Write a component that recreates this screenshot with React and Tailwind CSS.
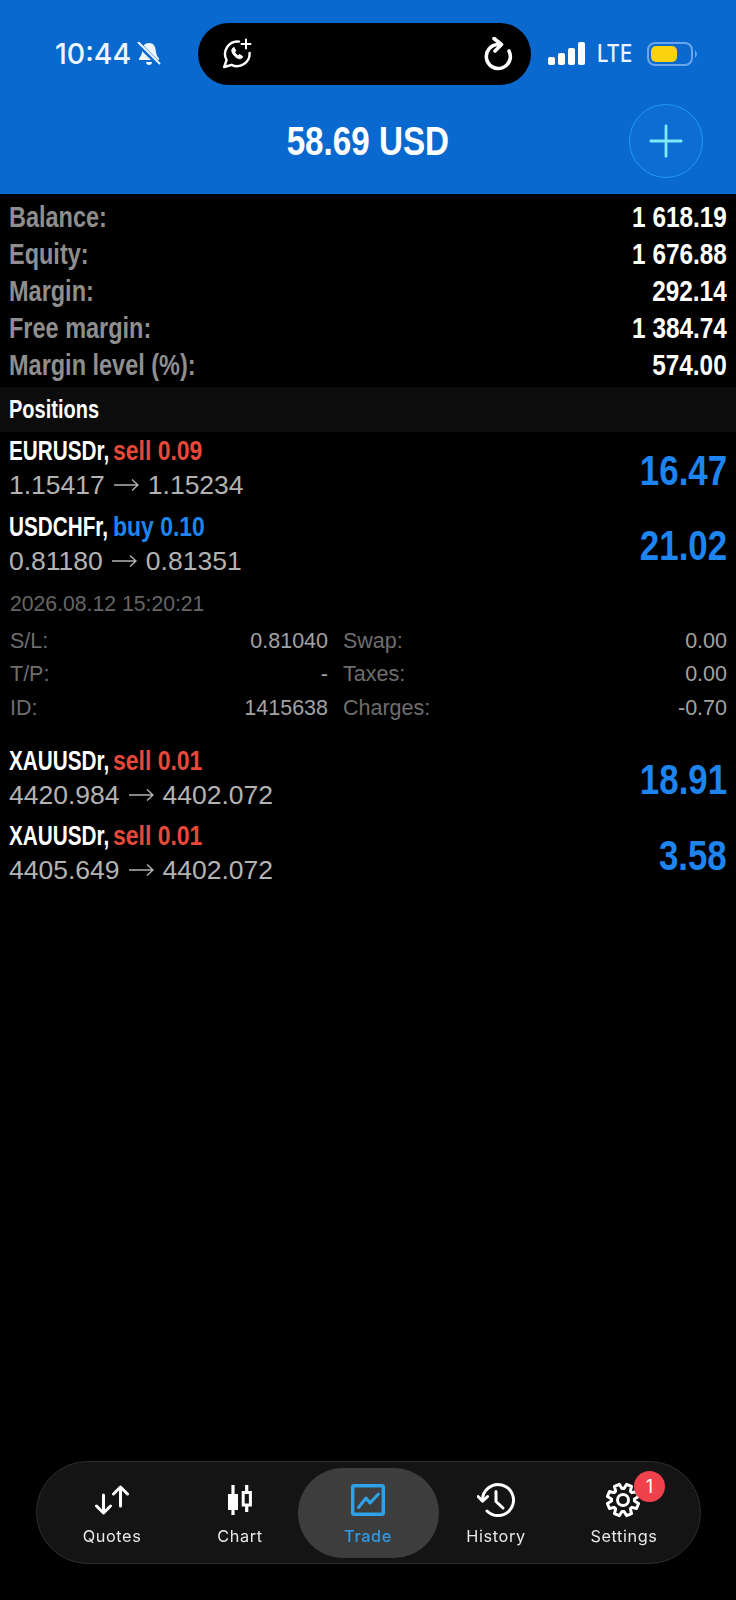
import { Plus } from "lucide-react";

const SANS = "font-['Liberation_Sans',Arial,sans-serif]";

// 8 tooth gear outline for the settings tab
function gearPath(cx, cy, outer, root) {
  const points = [];
  for (let i = 0; i < 8; i++) {
    const a = (i * Math.PI) / 4 + Math.PI / 8;
    [[-0.3, root], [-0.17, outer], [0.17, outer], [0.3, root]].forEach(([da, r]) => {
      points.push(`${(cx + r * Math.cos(a + da)).toFixed(2)} ${(cy + r * Math.sin(a + da)).toFixed(2)}`);
    });
  }
  return `M${points.join("L")}Z`;
}

function Narrow({ children, right, className = "" }) {
  // the app's text is a squeezed Helvetica, so squeeze Liberation the same way
  return (
    <span className={`inline-block whitespace-nowrap ${right ? "origin-right" : "origin-left"} ${className}`}>
      {children}
    </span>
  );
}

function SummaryRow({ label, value }) {
  return (
    <div className="flex h-[37px] items-center justify-between font-bold text-[29px]">
      <Narrow className="scale-x-[0.81] text-[#8e8e8e]">{label}</Narrow>
      <Narrow right className="scale-x-[0.84] text-white">{value}</Narrow>
    </div>
  );
}

function Position({ symbol, side, volume, open, now, profit, sideColor }) {
  return (
    <div className="flex h-[75.5px] justify-between">
      <div className="flex flex-col">
        <div className="flex h-[36px] items-center gap-[6px] text-[28px] font-bold leading-none">
          <Narrow className="w-[98px] scale-x-[0.74] text-white">{symbol},</Narrow>
          <Narrow className={`scale-x-[0.82] ${sideColor}`}>{side} {volume}</Narrow>
        </div>
        <div className="flex h-[34px] items-center whitespace-nowrap text-[26.5px] font-normal text-[#b3b3b3]">
          <span>{open}</span>
          <svg width="25" height="14" viewBox="0 0 25 14" fill="none" stroke="#b3b3b3" strokeWidth="1.4" className="mx-[9px] -mt-[2px]">
            <path d="M0 7h24M18 1.500 24 7l-6 5.500" />
          </svg>
          <span>{now}</span>
        </div>
      </div>
      <div className="flex h-[70px] items-center pt-[4px]">
        <Narrow right className="scale-x-[0.83] text-[42px] font-bold text-[#1d84f0]">{profit}</Narrow>
      </div>
    </div>
  );
}

function Detail({ label, value }) {
  return (
    <div className="flex h-[33.5px] items-center justify-between text-[21.5px]">
      <span className="text-[#6e6e6e]">{label}</span>
      <span className="text-[#a3a3a3]">{value}</span>
    </div>
  );
}

function NavItem({ icon, label, active, children }) {
  return (
    <div className={`relative flex h-[90px] flex-col items-center justify-center rounded-[45px] ${active ? "-mx-[6.5px] w-[141px] bg-[#3d3d3d]" : "w-[128px]"}`}>
      <div className="flex h-[40px] items-center justify-center">{icon}</div>
      <div className={`mt-[6px] text-[16.3px] leading-5 tracking-[0.6px] font-['Inter',sans-serif] ${active ? "font-medium text-[#2f9be6]" : "text-[#e8e8e8]"}`}>{label}</div>
      {children}
    </div>
  );
}

function QuotesIcon() {
  return (
    <svg width="34" height="30" viewBox="0 0 34 30" fill="none" stroke="#fff" strokeWidth="3" strokeLinecap="round" strokeLinejoin="round">
      <path d="M8.500 10v18M1.500 21l7 7 7-7" />
      <path d="M25.500 21V2M18.500 9l7-7 7 7" />
    </svg>
  );
}

function ChartIcon() {
  return (
    <svg width="24" height="30" viewBox="0 0 24 30" fill="none" stroke="#fff" strokeWidth="3.2">
      <path d="M5 0v30M18.700 0v27" />
      <rect x="0" y="9" width="10" height="16" fill="#fff" stroke="none" />
      <rect x="15.200" y="7.500" width="7.200" height="12.500" fill="#141414" strokeWidth="3" />
    </svg>
  );
}

function TradeIcon() {
  return (
    <svg width="34" height="32" viewBox="0 0 34 32" fill="none" stroke="#2ea3ea" strokeWidth="3.4" strokeLinejoin="round" strokeLinecap="round">
      <rect x="1.700" y="1.700" width="30.600" height="28.600" rx="1.500" />
      <path d="M7.500 23.500l7.500-9.500 4 5 8.500-9" strokeWidth="3" />
    </svg>
  );
}

function HistoryIcon() {
  return (
    <svg width="38" height="36" viewBox="0 0 38 36" fill="none" stroke="#fff" strokeWidth="3" strokeLinecap="round" strokeLinejoin="round">
      <path d="M5.500 18.500A15.500 15.500 0 1 1 10 29" />
      <path d="M1 14.500l4.600 4.600 5-4.600" />
      <path d="M19 9.500v10l7 6.500" />
    </svg>
  );
}

function SettingsIcon() {
  return (
    <svg width="36" height="36" viewBox="0 0 36 36" fill="none" stroke="#fff" strokeWidth="3" strokeLinejoin="round" className="-ml-[2px]">
      <path d={gearPath(18, 18, 16, 11.500)} />
      <circle cx="18" cy="18" r="5.500" />
    </svg>
  );
}

function MutedBell() {
  return (
    <svg width="24" height="24" viewBox="0 0 24 24" className="ml-[6px]">
      <path d="M12 1c4.500 0 6.500 3.500 6.800 8 .2 3 1.200 5 3.200 7.500v1.500H2v-1.500c2-2.500 3-4.500 3.200-7.500C5.500 4.500 7.500 1 12 1z" fill="#eef5ff" />
      <path d="M9 20h6c0 2-1.300 3-3 3s-3-1-3-3z" fill="#eef5ff" />
      <path d="M1 1.500 23 23.500" stroke="#0a69ce" strokeWidth="5" />
      <path d="M1 0 23 22" stroke="#eef5ff" strokeWidth="2" />
    </svg>
  );
}

function WhatsPlus() {
  return (
    <svg width="30" height="32" viewBox="0 0 30 32" fill="none" stroke="#fff" strokeWidth="2.4" strokeLinecap="round" strokeLinejoin="round">
      <path d="M17 3.600A12.500 12.500 0 0 0 4.600 22L2.200 29l7.400-2.200A12.500 12.500 0 0 0 27.600 15" />
      <path d="M10.500 10.500c-1.600 1.600-.6 4.600 2 7.400s5.800 3.600 7.400 2l.8-1.400-3.200-2-1.400 1.200c-1-.5-3-2.500-3.500-3.600l1.200-1.400-1.800-3.200z" fill="#fff" strokeWidth="1" />
      <path d="M24 1.500v9M19.500 6h9" strokeWidth="2" />
    </svg>
  );
}

function RefreshIcon() {
  return (
    <svg width="30" height="34" viewBox="0 0 30 34" fill="none" stroke="#fff" strokeWidth="3.6" strokeLinecap="round" strokeLinejoin="round">
      <path d="M15 7.500A12 12 0 1 0 26 14" />
      <path d="M11 1.500l7.500 6-6.500 6.500" />
    </svg>
  );
}

function StatusBar() {
  return (
    <div className="flex h-[85px] items-start pt-[23px]">
      <div className="flex h-[62px] w-[198px] items-center pl-[55px]">
        <span className="text-[28.5px] font-medium leading-none text-[#eef5ff] font-['Inter',sans-serif]">10:44</span>
        <MutedBell />
      </div>
      <div className="flex h-[62px] w-[333px] items-center justify-between rounded-[31px] bg-black pl-[24px] pr-[18px]">
        <WhatsPlus />
        <RefreshIcon />
      </div>
      <div className="flex h-[62px] items-center pl-[17px]">
        <svg width="37" height="24" viewBox="0 0 37 24" fill="#fff">
          <rect x="0" y="15" width="7" height="8" rx="2" />
          <rect x="10" y="11" width="7" height="12" rx="2" />
          <rect x="20" y="6" width="7" height="17" rx="2" />
          <rect x="30" y="0" width="7" height="23" rx="2" />
        </svg>
        <span className="ml-[12px] origin-left scale-x-[0.85] text-[24px] font-medium text-[#eef5ff] font-['Inter',sans-serif]">LTE</span>
        <svg width="52" height="24" viewBox="0 0 52 24" fill="none" className="ml-[9px]">
          <rect x="1" y="1" width="44" height="22" rx="7" stroke="#6ba6ec" strokeWidth="2" />
          <rect x="4" y="4" width="26" height="16" rx="5" fill="#fbd20e" />
          <path d="M48 8.500c2.500 1 2.500 6 0 7z" fill="#6ba6ec" />
        </svg>
      </div>
    </div>
  );
}

export default function App() {
  return (
    <div className={`h-[1600px] w-[736px] overflow-hidden bg-black ${SANS}`}>
      <header className="h-[194px] bg-[#0a69ce]">
        <StatusBar />
        <div className="relative flex h-[109px] items-center justify-center pt-[2px]">
          <span className="inline-block scale-x-[0.83] text-[40px] font-bold leading-none text-white">58.69 USD</span>
          <div className="absolute right-[33px] top-[19px] flex h-[74px] w-[74px] items-center justify-center rounded-full border-[1.5px] border-[#1f9bf0] bg-[#0d6dd2]">
            <Plus size={52} strokeWidth={1.3} className="text-[#7fe9f7]" />
          </div>
        </div>
      </header>

      <section className="px-[9px] pt-[5px]">
        <SummaryRow label="Balance:" value="1 618.19" />
        <SummaryRow label="Equity:" value="1 676.88" />
        <SummaryRow label="Margin:" value="292.14" />
        <SummaryRow label="Free margin:" value="1 384.74" />
        <SummaryRow label="Margin level (%):" value="574.00" />
      </section>

      <div className="mt-[3px] flex h-[45px] items-center bg-[#0c0c0c] px-[9px] pt-[1px] text-[25px] font-bold text-white">
        <Narrow className="scale-x-[0.8]">Positions</Narrow>
      </div>

      <section className="px-[9px] pt-[1px]">
        <Position symbol="EURUSDr" side="sell" volume="0.09" open="1.15417" now="1.15234" profit="16.47" sideColor="text-[#e8483a]" />
        <Position symbol="USDCHFr" side="buy" volume="0.10" open="0.81180" now="0.81351" profit="21.02" sideColor="text-[#1d84f0]" />

        <div className="mt-[3px] flex h-[34px] items-center pl-[1px] text-[21.2px] text-[#666666]">
          2026.08.12 15:20:21
        </div>
        <div className="mt-[3px] grid grid-cols-[318px_1fr] gap-x-[15px] pl-[1px]">
          <div>
            <Detail label="S/L:" value="0.81040" />
            <Detail label="T/P:" value="-" />
            <Detail label="ID:" value="1415638" />
          </div>
          <div>
            <Detail label="Swap:" value="0.00" />
            <Detail label="Taxes:" value="0.00" />
            <Detail label="Charges:" value="-0.70" />
          </div>
        </div>

        <div className="mt-[18px]">
          <Position symbol="XAUUSDr" side="sell" volume="0.01" open="4420.984" now="4402.072" profit="18.91" sideColor="text-[#e8483a]" />
          <Position symbol="XAUUSDr" side="sell" volume="0.01" open="4405.649" now="4402.072" profit="3.58" sideColor="text-[#e8483a]" />
        </div>
      </section>

      <div className="fixed left-[36px] top-[1461px] flex h-[103px] w-[665px] items-center rounded-[52px] border border-[#2e2e2e] bg-[#141414] px-[11px]">
        <NavItem icon={<QuotesIcon />} label="Quotes" />
        <NavItem icon={<ChartIcon />} label="Chart" />
        <NavItem icon={<TradeIcon />} label="Trade" active />
        <NavItem icon={<HistoryIcon />} label="History" />
        <NavItem icon={<SettingsIcon />} label="Settings">
          <span className="absolute right-[23px] top-[3px] flex h-[31px] w-[31px] items-center justify-center rounded-full bg-[#f0424c] text-[18px] text-white font-['Inter',sans-serif]">1</span>
        </NavItem>
      </div>
    </div>
  );
}
